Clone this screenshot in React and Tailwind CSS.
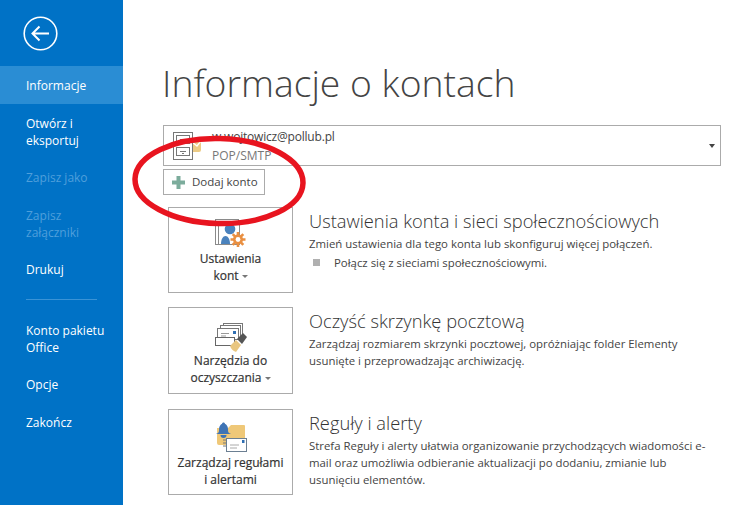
const F = { fontFamily: '"Open Sans", "Noto Sans", sans-serif' };

function NavItem({ lines, active, disabled }) {
  return (
    <div className={`px-[26px] py-[10px] text-[12px] whitespace-nowrap ${lines.length > 1 ? 'leading-[17px]' : 'leading-[18px]'} ${active ? 'bg-[#2a8dd4]' : ''} ${disabled ? 'text-[#4f9fdb]' : 'text-white'}`}>
      {lines.map((l) => <div key={l} className="relative top-[1px]">{l}</div>)}
    </div>
  );
}

function AccountIcon() {
  return (
    <svg width="28" height="28" viewBox="0 0 28 28" fill="none">
      <path d="M18 9h10v9a2 2 0 0 1-2 2h-8z" fill="#eccb85" />
      <path d="M19 10l5 4 4-5" stroke="#fff" strokeWidth="1.3" />
      <rect x="0.5" y="0.5" width="19" height="27" fill="#fff" stroke="#777" />
      <rect x="3.5" y="3.5" width="13" height="8" stroke="#777" />
      <path d="M7 7.5h6" stroke="#777" />
      <rect x="3.5" y="15.5" width="13" height="8" stroke="#777" />
      <path d="M7 19.5h6M9 21.5h2" stroke="#777" />
    </svg>
  );
}

function SettingsIcon() {
  return (
    <svg width="32" height="28" viewBox="0 0 32 28" fill="none">
      <rect x="0.5" y="0.5" width="23" height="25" stroke="#8a8a8a" fill="#fff" />
      <rect x="3.5" y="3.5" width="21" height="22" stroke="#8a8a8a" fill="#fff" />
      <circle cx="15" cy="10" r="5.3" fill="#4a82bd" />
      <path d="M6 25c0-5 2-8 4.5-8s4.5 3 4.5 8z" fill="#4a82bd" />
      <g stroke="#e98f41" strokeWidth="2.6">
        <path d="M23 13v15M15.5 20.5h15M17.7 15.2l10.6 10.6M28.3 15.2L17.7 25.8" />
      </g>
      <circle cx="23" cy="20.5" r="5" fill="#e98f41" />
      <circle cx="23" cy="20.5" r="2.4" fill="#fff" />
    </svg>
  );
}

function CleanIcon() {
  return (
    <svg width="32" height="29" viewBox="0 0 32 29" fill="none">
      <rect x="8.5" y="0.5" width="19" height="13" stroke="#777" fill="#fff" />
      <rect x="5.5" y="2.5" width="20" height="13" stroke="#777" fill="#fff" />
      <rect x="2.5" y="5.5" width="21" height="11" stroke="#777" fill="#fff" />
      <rect x="18" y="8" width="3" height="3" fill="#2f6fb3" />
      <path d="M6 10.5h8M6 13h5" stroke="#999" />
      <rect x="0.5" y="14.5" width="19" height="8" stroke="#666" fill="#fff" />
      <path d="M15 23l6-6 5 5-5 7c-3-1-5-3-6-6z" fill="#e9c67f" />
      <path d="M22 16l6-6 4 4-5 7z" fill="#555" />
    </svg>
  );
}

function RulesIcon() {
  return (
    <svg width="32" height="32" viewBox="0 0 32 32" fill="none">
      <path d="M2 8h11l3-3h13a1 1 0 0 1 1 1v19H4a2 2 0 0 1-2-2z" fill="#efc878" />
      <path d="M3 13c1-1 1-2 1-4 0-3 2-5 3-5 0-2 3-2 3 0 1 0 3 2 3 5 0 2 0 3 1 4l2 1H1z" fill="#3f74b5" />
      <path d="M5.5 15h6a3 3 0 0 1-6 0z" fill="#3f74b5" />
      <rect x="11.5" y="18.5" width="20" height="13" stroke="#6b7f92" fill="#fff" />
      <rect x="27" y="20" width="2.5" height="3" fill="#2f6fb3" />
      <path d="M15 25h9M15 28h7" stroke="#aaa" />
      <path d="M8 20h3M8 23h3M8 26h3" stroke="#777" />
    </svg>
  );
}

function Section({ icon, lines, caret, title, mt, h, iconPad, iconGap, children }) {
  return (
    <div className={`flex ml-[6px] ${mt}`}>
      <div className={`w-[125px] ${h} ${iconPad} shrink-0 border border-[#ababab] bg-white flex flex-col items-center text-center text-[12px] leading-[17px] text-[#333] [-webkit-text-stroke:0.2px_#333]`}>
        <div className={`${iconGap} flex justify-center`}>{icon}</div>
        {lines.map((l, i) => (
          <div key={l} className="whitespace-nowrap">
            {l}
            {caret && i === lines.length - 1 && <span className="inline-block ml-[3px] mb-[2px] w-0 h-0 border-l-[3px] border-r-[3px] border-t-[3px] border-l-transparent border-r-transparent border-t-[#777]" />}
          </div>
        ))}
      </div>
      <div className="ml-[16px] pt-[1px]">
        <div className="text-[18.3px] leading-[26px] font-light text-[#333] whitespace-nowrap">{title}</div>
        {children}
      </div>
    </div>
  );
}

export default function App() {
  return (
    <div style={F} className="relative flex w-[744px] h-[505px] overflow-hidden bg-white text-[#444]">
      <aside className="w-[123px] h-full shrink-0 bg-[#0072c6]">
        <div className="h-[66px] pl-[23px] pt-[16px]">
          <svg width="35" height="35" viewBox="0 0 35 35" fill="none" stroke="#fff">
            <circle cx="17.5" cy="17.5" r="16.3" strokeWidth="1.6" />
            <path d="M10 17.5h16M16.5 10.5l-7 7 7 7" strokeWidth="2" />
          </svg>
        </div>
        <NavItem lines={['Informacje']} active />
        <NavItem lines={['Otwórz i', 'eksportuj']} />
        <NavItem lines={['Zapisz jako']} disabled />
        <NavItem lines={['Zapisz', 'załączniki']} disabled />
        <NavItem lines={['Drukuj']} />
        <div className="mt-[11px] mb-[11px] ml-[26px] w-[71px] h-px bg-[#3a93d6]" />
        <NavItem lines={['Konto pakietu', 'Office']} />
        <NavItem lines={['Opcje']} />
        <NavItem lines={['Zakończ']} />
      </aside>
      <main className="flex-1 pl-[39px] pr-[23px]">
        <h1 className="mt-[58px] text-[37.3px] leading-[50px] font-light whitespace-nowrap text-[#444]">Informacje o kontach</h1>
        <div className="mt-[17px] ml-[1px] h-[41px] w-[558px] border border-[#ababab] flex items-center pl-[9px] relative">
          <AccountIcon />
          <div className="ml-[11px] text-[12px] leading-[17px]">
            <div className="text-[#444] tracking-[-0.2px]">w.wojtowicz@pollub.pl</div>
            <div className="text-[#777] mt-[2px]">POP/SMTP</div>
          </div>
          <span className="ml-auto mr-[5px] w-0 h-0 border-l-[3.5px] border-r-[3.5px] border-t-[4px] border-l-transparent border-r-transparent border-t-[#444]" />
        </div>
        <button className="mt-[3px] ml-[1px] h-[26px] w-[102px] border border-[#ababab] flex items-center pl-[8px] text-[11.5px] text-[#444]">
          <svg width="13" height="13" viewBox="0 0 13 13" fill="#7cac9c"><path d="M4.5 0h4v4.5H13v4H8.5V13h-4V8.5H0v-4h4.5z" /></svg>
          <span className="ml-[7px]">Dodaj konto</span>
        </button>
        <Section icon={<SettingsIcon />} lines={['Ustawienia', 'kont']} caret title="Ustawienia konta i sieci społecznościowych" mt="mt-[12px]" h="h-[86px]" iconPad="pt-[11px]" iconGap="mb-[3px]">
          <p className="text-[11.4px] leading-[17px] mt-[1px] whitespace-nowrap">Zmień ustawienia dla tego konta lub skonfiguruj więcej połączeń.</p>
          <div className="flex items-center mt-[2px] text-[11.4px] leading-[17px]">
            <span className="ml-[4px] mr-[14px] w-[7px] h-[7px] bg-[#b0b0b0]" />
            Połącz się z sieciami społecznościowymi.
          </div>
        </Section>
        <Section icon={<CleanIcon />} lines={['Narzędzia do', 'oczyszczania']} caret title="Oczyść skrzynkę pocztową" mt="mt-[14px]" h="h-[87px]" iconPad="pt-[15px]" iconGap="mb-0">
          <p className="text-[11.4px] leading-[17px] mt-[1px] whitespace-nowrap">Zarządzaj rozmiarem skrzynki pocztowej, opróżniając folder Elementy<br />usunięte i przeprowadzając archiwizację.</p>
        </Section>
        <Section icon={<RulesIcon />} lines={['Zarządzaj regułami', 'i alertami']} title="Reguły i alerty" mt="mt-[15px]" h="h-[86px]" iconPad="pt-[10px]" iconGap="mb-[2px]">
          <p className="text-[11.4px] leading-[17px] mt-[1px] whitespace-nowrap">Strefa Reguły i alerty ułatwia organizowanie przychodzących wiadomości e-<br />mail oraz umożliwia odbieranie aktualizacji po dodaniu, zmianie lub<br />usunięciu elementów.</p>
        </Section>
      </main>
      <svg className="absolute left-[125px] top-[130px] pointer-events-none" width="190" height="102" viewBox="0 0 190 102" fill="none">
        <ellipse cx="94" cy="51" rx="84" ry="42.5" stroke="#e8141f" strokeWidth="5.5" transform="rotate(1.5 94 51)" />
      </svg>
    </div>
  );
}
